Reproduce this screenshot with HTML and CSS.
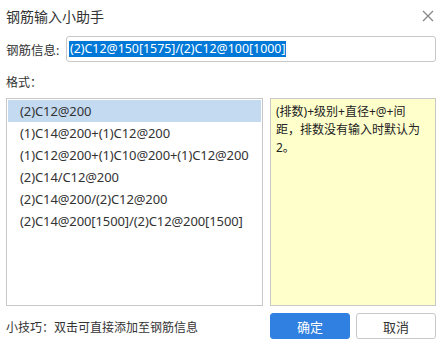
FILE: index.html
```html
<!doctype html>
<html lang="zh-CN">
  <head>
    <meta charset="UTF-8" />
    <title>钢筋输入小助手</title>
    <link rel="stylesheet" href="styles.css">
  </head>
  <body>
    <div class="dialog">
      <div class="dialog-header">
        <span class="dialog-title">钢筋输入小助手</span>
        <svg class="dialog-close" width="12" height="12" viewBox="0 0 12 12">
          <path d="M1 1 L11 11 M11 1 L1 11" stroke="#8a8a8a" stroke-width="1.4" fill="none" />
        </svg>
      </div>

      <div class="field">
        <span class="field-label">钢筋信息:</span>
        <div class="field-input"><span class="selected">(2)C12@150[1575]/(2)C12@100[1000]</span></div>
      </div>

      <div class="format-label">格式：</div>

      <div class="dialog-body">
        <ul class="format-list">
          <li class="active">(2)C12@200</li>
          <li>(1)C14@200+(1)C12@200</li>
          <li>(1)C12@200+(1)C10@200+(1)C12@200</li>
          <li>(2)C14/C12@200</li>
          <li>(2)C14@200/(2)C12@200</li>
          <li>(2)C14@200[1500]/(2)C12@200[1500]</li>
        </ul>
        <div class="format-tip">(排数)+级别+直径+@+间距，排数没有输入时默认为2。</div>
      </div>

      <div class="dialog-footer">
        <span class="hint">小技巧：双击可直接添加至钢筋信息</span>
        <div class="buttons">
          <div class="button button-primary">确定</div>
          <div class="button">取消</div>
        </div>
      </div>
    </div>
  </body>
</html>
```

FILE: styles.css
```css
html,
body {
  margin: 0;
  padding: 0;
  background: #fff;
}

body {
  font-family: "Noto Sans", "Noto Sans CJK SC", sans-serif;
  font-size: 12px;
  color: #333;
}

.dialog {
  width: 444px;
  height: 345px;
  box-sizing: border-box;
  padding: 0 8px 0 6px;
  display: flex;
  flex-direction: column;
}

.dialog-header {
  height: 32px;
  display: flex;
  align-items: center;
  justify-content: space-between;
  padding-right: 2px;
}

.dialog-title {
  font-size: 14px;
  color: #333;
}

.field {
  margin-top: 4px;
  height: 26px;
  display: flex;
  align-items: center;
}

.field-label {
  width: 60px;
  font-size: 12.5px;
}

.field-input {
  flex: 1;
  height: 26px;
  box-sizing: border-box;
  border: 1px solid #c8c8c8;
  border-radius: 3px;
  display: flex;
  align-items: center;
  padding-left: 2px;
  font-size: 12.4px;
}

.selected {
  background: #0078d7;
  color: #fff;
  line-height: 16px;
  padding: 0 1px;
}

.format-label {
  height: 36px;
  line-height: 41px;
}

.dialog-body {
  height: 208px;
  display: flex;
  gap: 7px;
}

.format-list {
  width: 257px;
  margin: 0;
  padding: 1px;
  list-style: none;
  box-sizing: border-box;
  border: 1px solid #c8c8c8;
  font-size: 13px;
  letter-spacing: -0.1px;
}

.format-list li {
  height: 22px;
  line-height: 22px;
  padding-left: 12px;
  white-space: nowrap;
}

.format-list li.active {
  background: #c4daf1;
}

.format-tip {
  flex: 1;
  box-sizing: border-box;
  border: 1px solid #c8c8c8;
  background: #ffffcc;
  padding: 4px 13px 4px 5px;
  line-height: 18px;
  color: #222;
}

.dialog-footer {
  margin-top: 7px;
  height: 26px;
  display: flex;
  align-items: center;
  justify-content: space-between;
}

.hint {
  padding-top: 2px;
}

.buttons {
  display: flex;
  gap: 6px;
}

.button {
  width: 80px;
  height: 26px;
  box-sizing: border-box;
  display: flex;
  align-items: center;
  justify-content: center;
  border: 1px solid #c8c8c8;
  border-radius: 3px;
  color: #333;
  background: #fff;
  font-size: 13px;
}

.button.button-primary {
  background: #2f80e0;
  border-color: #2f80e0;
  color: #fff;
}
```
